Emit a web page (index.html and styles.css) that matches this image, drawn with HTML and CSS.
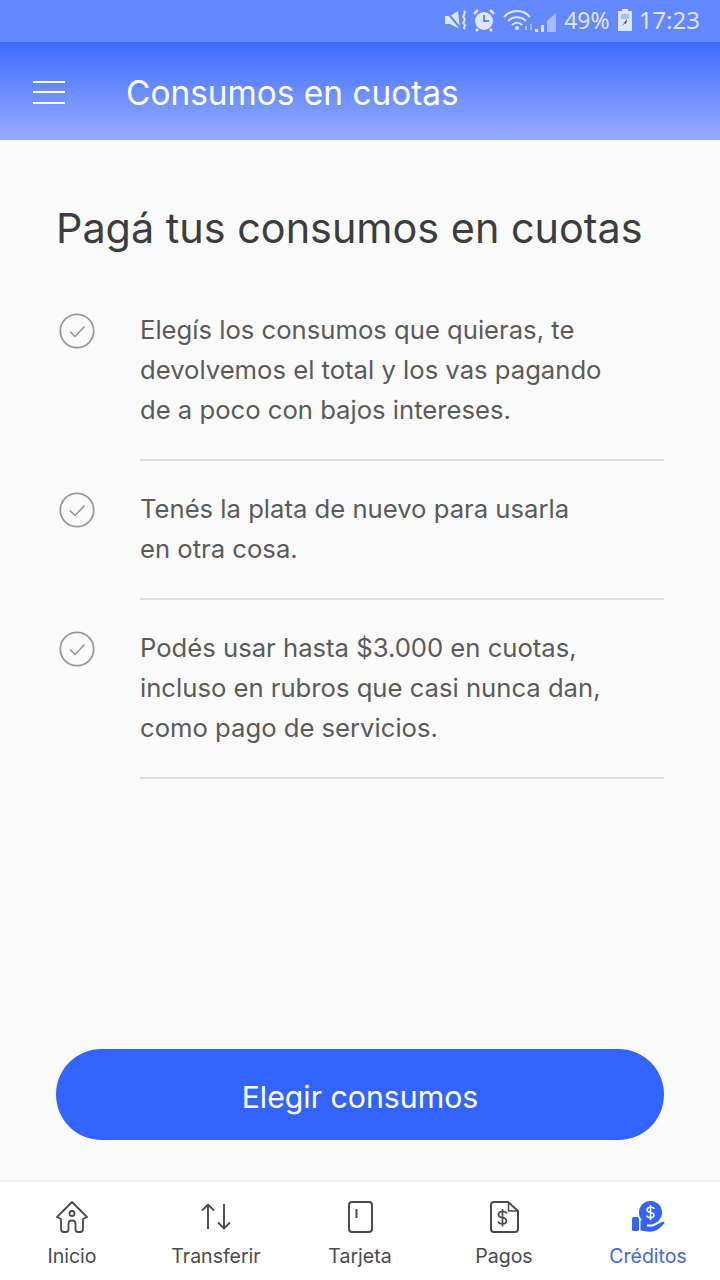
FILE: index.html
```html
<!DOCTYPE html>
<html lang="es">
<head>
<meta charset="utf-8">
<title>Consumos en cuotas</title>
<link rel="stylesheet" href="styles.css">
</head>
<body>
<div class="app">
  <div class="status">
    <svg class="st-mute" width="24" height="24" viewBox="0 0 24 24"><path d="M1 8h5l8-5 2 18-10-5H1z" fill="#dfe6ff"/><path d="M2 3l15 18" stroke="#6488ff" stroke-width="2"/><path d="M20 3c3 3-3 4 0 7s-3 4 0 6-2 3 1 5" fill="none" stroke="#dfe6ff" stroke-width="2"/></svg>
    <svg class="st-alarm" width="22" height="24" viewBox="0 0 22 24"><circle cx="11" cy="13" r="9" fill="#dfe6ff"/><path d="M11 7v6h5" fill="none" stroke="#6488ff" stroke-width="2"/><path d="M1 6l4-4M21 6l-4-4M5 21l-2 2M17 21l2 2" stroke="#dfe6ff" stroke-width="2.500"/></svg>
    <svg class="st-net" width="54" height="24" viewBox="0 0 54 24"><path d="M1 9c7-8 19-8 26 0M5 13c5-5 13-5 18 0M9 17c3-3 7-3 10 0" fill="none" stroke="#dfe6ff" stroke-width="2"/><circle cx="14" cy="20" r="2" fill="#dfe6ff"/><path d="M22 18h2v4h-2zM27 16h2v6h-2z" fill="#a9bcff"/><path d="M32 24h3v-3h-3zM38 24h3v-7h-3z" fill="#dfe6ff"/><path d="M44 24h9V5l-9 8z" fill="#a9bcff"/></svg>
    <span class="st-pct">49%</span>
    <svg class="st-batt" width="14" height="22" viewBox="0 0 14 22"><path d="M4 0h6v2h4v20H0V2h4z" fill="#dfe6ff"/><path d="M3 5h8v5H3z" fill="#a9bcff"/><path d="M9 10l-5 7 3-3 1 1z" fill="#24324f"/></svg>
    <span class="st-time">17:23</span>
  </div>
  <header class="bar">
    <div class="burger"><i></i><i></i><i></i></div>
    <div class="bar-title">Consumos en cuotas</div>
  </header>
  <main class="content">
    <h1 class="title">Pagá tus consumos en cuotas</h1>
    <ul class="list">
      <li class="item">
        <svg class="check" width="36" height="36" viewBox="0 0 36 36"><circle cx="18" cy="18" r="16.700" fill="none" stroke="#9a9a9a" stroke-width="1.800"/><path d="M11 18.500l5 5 9.500-10" fill="none" stroke="#929292" stroke-width="1.500"/></svg>
        <p class="text">Elegís los consumos que quieras, te<br>devolvemos el total y los vas pagando<br>de a poco con bajos intereses.</p>
      </li>
      <li class="item">
        <svg class="check" width="36" height="36" viewBox="0 0 36 36"><circle cx="18" cy="18" r="16.700" fill="none" stroke="#9a9a9a" stroke-width="1.800"/><path d="M11 18.500l5 5 9.500-10" fill="none" stroke="#929292" stroke-width="1.500"/></svg>
        <p class="text">Tenés la plata de nuevo para usarla<br>en otra cosa.</p>
      </li>
      <li class="item">
        <svg class="check" width="36" height="36" viewBox="0 0 36 36"><circle cx="18" cy="18" r="16.700" fill="none" stroke="#9a9a9a" stroke-width="1.800"/><path d="M11 18.500l5 5 9.500-10" fill="none" stroke="#929292" stroke-width="1.500"/></svg>
        <p class="text">Podés usar hasta $3.000 en cuotas,<br>incluso en rubros que casi nunca dan,<br>como pago de servicios.</p>
      </li>
    </ul>
    <button class="cta">Elegir consumos</button>
  </main>
  <nav class="nav">
    <div class="tab">
      <svg width="34" height="34" viewBox="0 0 34 34" fill="none" stroke="#4a4a4a" stroke-width="1.800" stroke-linejoin="round"><path d="M2 17L17 2l15 15-4 2v10q0 3-3 3h-2q-2.500 0-2.500-3v-5q0-3.500-3.500-3.500t-3.500 3.500v5q0 3-2.500 3h-2q-3 0-3-3V19z"/><circle cx="17" cy="13.500" r="2.500"/></svg>
      <span>Inicio</span>
    </div>
    <div class="tab">
      <svg width="34" height="34" viewBox="0 0 34 34" fill="none" stroke="#4a4a4a" stroke-width="1.900"><path d="M9 29V5M3 10.500L9 4.500l6 6M25 4v24.500M19 22.500l6 6 6-6"/></svg>
      <span>Transferir</span>
    </div>
    <div class="tab">
      <svg width="34" height="34" viewBox="0 0 34 34" fill="none" stroke="#4a4a4a" stroke-width="2"><rect x="6" y="2" width="23" height="30" rx="3"/><path d="M13.500 9v9"/></svg>
      <span>Tarjeta</span>
    </div>
    <div class="tab">
      <svg width="34" height="34" viewBox="0 0 34 34" fill="none" stroke="#4a4a4a" stroke-width="2" stroke-linejoin="round"><path d="M21 2H7a3 3 0 0 0-3 3v24a3 3 0 0 0 3 3h21a3 3 0 0 0 3-3V11z"/><path d="M21.500 2.500v8.500h9" stroke-width="1.500"/><path d="M20 13.500q-1-2-4.500-2t-4 2.700q0 3 4 3.500t4 3.500q-.5 2.800-4 2.800t-4.500-2.500M15.500 9v17.500" stroke-width="1.700"/></svg>
      <span>Pagos</span>
    </div>
    <div class="tab active">
      <svg width="34" height="34" viewBox="0 0 34 34"><circle cx="19.500" cy="12.500" r="11.500" fill="#3464f0"/><path d="M23.500 9q-1-1.800-4-1.800t-3.500 2.300q0 2.500 3.500 3t3.500 2.800q-.5 2.400-3.500 2.400t-4-2.200M19.500 5v15" fill="none" stroke="#fff" stroke-width="1.500"/><rect x="1" y="17" width="7" height="14" rx="1.500" fill="#3464f0"/><path d="M9.500 20.500q4-1.500 7.500 0l3 1q2 .8 1.500 3h-5.500v2h6l9-4.500q2.500-.8 2.500 1-5 6.500-10 8-5 1.500-14-.5z" fill="#3464f0"/></svg>
      <span>Créditos</span>
    </div>
  </nav>
</div>
</body>
</html>
```

FILE: styles.css
```css
* { box-sizing: border-box; }
html, body { margin: 0; padding: 0; }
body { font-family: "Inter", "Liberation Sans", sans-serif; background: #fafafa; }
.app { width: 720px; height: 1280px; display: flex; flex-direction: column; overflow: hidden; }
.status { height: 42px; flex: none; background: #6488ff; display: flex; align-items: center; justify-content: flex-end; padding: 0 20px 2px 0; color: #dfe6ff; }
.st-alarm { margin-left: 5px; }
.st-net { margin-left: 8px; }
.st-pct { margin-left: 7px; font: 23px/24px "Noto Sans", sans-serif; }
.st-batt { margin-left: 8px; }
.st-time { margin-left: 7px; font: 24px/24px "Noto Sans", sans-serif; }
.bar { height: 98px; flex: none; background: linear-gradient(180deg, #3f6bff 0%, #95adff 100%); display: flex; align-items: center; padding: 4px 0 0 33px; }
.burger { width: 32px; height: 23px; margin-top: -2px; display: flex; flex-direction: column; justify-content: space-between; }
.burger i { display: block; height: 2px; background: #fff; }
.bar-title { margin-left: 61px; color: #fff; font-size: 33.400px; }
.content { flex: 1; display: flex; flex-direction: column; padding: 64px 56px 40px; min-height: 0; }
.title { margin: 0 0 58px; font-size: 41.350px; font-weight: 400; line-height: 48px; color: #3d3d3d; }
.list { list-style: none; margin: 0; padding: 0; }
.item { display: flex; align-items: flex-start; }
.check { flex: none; margin: 3px 0 0 3px; }
.text { margin: 0 0 28px 45px; flex: 1; padding-bottom: 29px; border-bottom: 2px solid #dedede; font-size: 25.650px; line-height: 40px; color: #5a5a5a; }
.cta { margin-top: auto; height: 91px; border: 0; border-radius: 46px; padding: 4px 0 0; background: #3464ff; color: #fff; font: 400 30.250px "Inter", sans-serif; }
.nav { height: 100px; flex: none; background: #fff; border-top: 2px solid #eee; display: grid; grid-template-columns: repeat(5, 144px); }
.tab { display: flex; flex-direction: column; align-items: center; padding-top: 18px; color: #4a4a4a; font-size: 19.500px; }
.tab span { margin-top: 10px; line-height: 24px; }
.tab.active { color: #3e69dd; }
```
